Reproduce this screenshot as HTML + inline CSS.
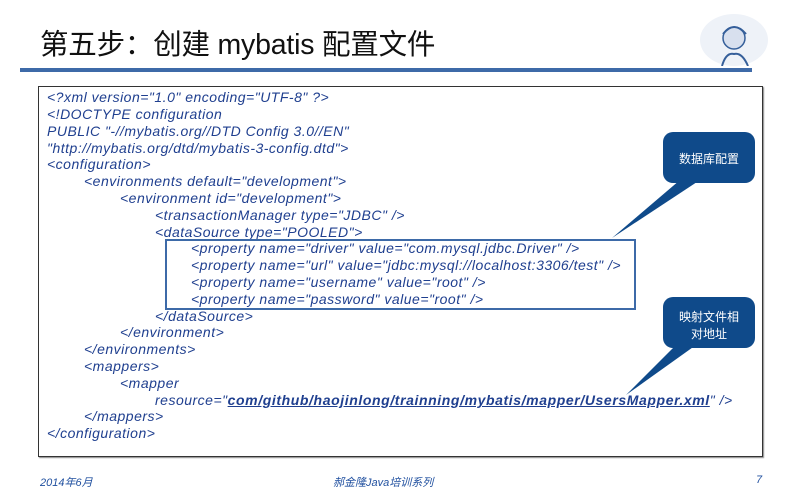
<!DOCTYPE html>
<html><head><meta charset="utf-8"><style>
body{margin:0;width:800px;height:500px;background:#fff;position:relative;overflow:hidden;font-family:"Liberation Sans","Noto Sans CJK SC",sans-serif}
.t{position:absolute;left:40px;top:22px;font-size:28.5px;color:#111;letter-spacing:-0.2px}
.bar{position:absolute;left:20px;top:68px;width:732px;height:4px;background:#3e6aa8}
.box{position:absolute;left:38px;top:86px;width:723px;height:369px;border:1px solid #333;box-shadow:1px 1px 1px #888}
.l{position:absolute;font-style:italic;font-size:14px;color:#1f3f8f;white-space:pre;letter-spacing:0.5px;line-height:16px}
.f{position:absolute;top:474px;font-style:italic;font-size:11px;color:#1f4f9f}
u{font-weight:bold;letter-spacing:0.6px}
</style></head><body>
<div class="t">第五步：创建 mybatis 配置文件</div>
<svg style="position:absolute;left:696px;top:14px" width="80" height="52"><ellipse cx="38" cy="26" rx="34" ry="26" fill="#eef2f8"/><circle cx="38" cy="24" r="11" fill="#d8e0ee" stroke="#355f9a" stroke-width="1.5"/><path d="M27 20 Q38 6 50 20 M26 52 Q30 38 38 40 Q46 38 52 52" fill="none" stroke="#355f9a" stroke-width="2"/></svg>
<div class="bar"></div>
<div class="box"></div>
<div class="l" style="left:47px;top:89px">&lt;?xml version="1.0" encoding="UTF-8" ?&gt;</div>
<div class="l" style="left:47px;top:106px">&lt;!DOCTYPE configuration</div>
<div class="l" style="left:47px;top:123px">PUBLIC "-//mybatis.org//DTD Config 3.0//EN"</div>
<div class="l" style="left:47px;top:140px">"http://mybatis.org/dtd/mybatis-3-config.dtd"&gt;</div>
<div class="l" style="left:47px;top:156px">&lt;configuration&gt;</div>
<div class="l" style="left:84px;top:173px">&lt;environments default="development"&gt;</div>
<div class="l" style="left:120px;top:190px">&lt;environment id="development"&gt;</div>
<div class="l" style="left:155px;top:207px">&lt;transactionManager type="JDBC" /&gt;</div>
<div class="l" style="left:155px;top:224px">&lt;dataSource type="POOLED"&gt;</div>
<div class="l" style="left:191px;top:240px">&lt;property name="driver" value="com.mysql.jdbc.Driver" /&gt;</div>
<div class="l" style="left:191px;top:257px">&lt;property name="url" value="jdbc:mysql://localhost:3306/test" /&gt;</div>
<div class="l" style="left:191px;top:274px">&lt;property name="username" value="root" /&gt;</div>
<div class="l" style="left:191px;top:291px">&lt;property name="password" value="root" /&gt;</div>
<div class="l" style="left:155px;top:308px">&lt;/dataSource&gt;</div>
<div class="l" style="left:120px;top:324px">&lt;/environment&gt;</div>
<div class="l" style="left:84px;top:341px">&lt;/environments&gt;</div>
<div class="l" style="left:84px;top:358px">&lt;mappers&gt;</div>
<div class="l" style="left:120px;top:375px">&lt;mapper</div>
<div class="l" style="left:155px;top:392px">resource="<u>com/github/haojinlong/trainning/mybatis/mapper/UsersMapper.xml</u>" /&gt;</div>
<div class="l" style="left:84px;top:408px">&lt;/mappers&gt;</div>
<div class="l" style="left:47px;top:425px">&lt;/configuration&gt;</div>
<svg style="position:absolute;left:0;top:0" width="800" height="500">
<rect x="166" y="240" width="469" height="69" fill="none" stroke="#3d6aa8" stroke-width="2"/>
<polygon points="680,180 700,180 612,238" fill="#0f4a8a"/>
<rect x="663" y="132" width="92" height="51" rx="10" fill="#0f4a8a"/>
<polygon points="676,345 696,345 626,395" fill="#0f4a8a"/>
<rect x="663" y="297" width="92" height="51" rx="10" fill="#0f4a8a"/>
<text x="709" y="163" fill="#fff" font-size="12" text-anchor="middle" font-family="Liberation Sans, Noto Sans CJK SC, sans-serif">数据库配置</text>
<text x="709" y="321" fill="#fff" font-size="12" text-anchor="middle" font-family="Liberation Sans, Noto Sans CJK SC, sans-serif">映射文件相</text>
<text x="709" y="338" fill="#fff" font-size="12" text-anchor="middle" font-family="Liberation Sans, Noto Sans CJK SC, sans-serif">对地址</text>
</svg>
<div class="f" style="left:40px">2014年6月</div>
<div class="f" style="left:333px">郝金隆Java培训系列</div>
<div class="f" style="left:756px">7</div>
</body></html>
